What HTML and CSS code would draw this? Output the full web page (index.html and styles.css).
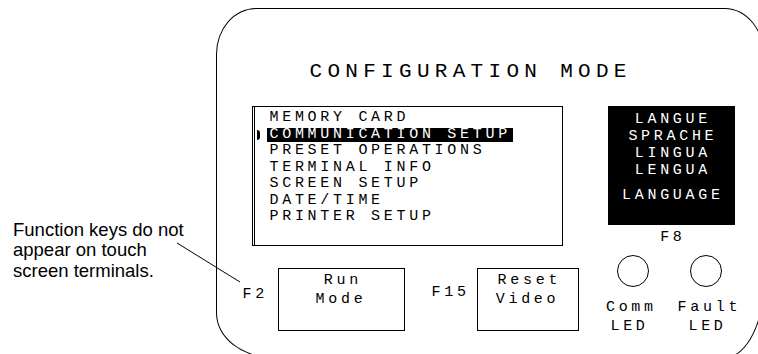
FILE: index.html
```html
<!DOCTYPE html>
<html>
<head>
<meta charset="utf-8">
<link rel="stylesheet" href="styles.css">
</head>
<body>
<div class="page">
  <div class="note">
    <p>Function keys do not<br>appear on touch<br>screen terminals.</p>
  </div>
  <div class="panel">
    <div class="title">CONFIGURATION MODE</div>
    <div class="middle">
      <div class="menu">
        <div class="row"><span class="mark"></span><span class="label">MEMORY CARD</span></div>
        <div class="row active"><span class="mark"><i class="caret"></i></span><span class="label">COMMUNICATION SETUP</span></div>
        <div class="row"><span class="mark"></span><span class="label">PRESET OPERATIONS</span></div>
        <div class="row"><span class="mark"></span><span class="label">TERMINAL INFO</span></div>
        <div class="row"><span class="mark"></span><span class="label">SCREEN SETUP</span></div>
        <div class="row"><span class="mark"></span><span class="label">DATE/TIME</span></div>
        <div class="row"><span class="mark"></span><span class="label">PRINTER SETUP</span></div>
      </div>
      <div class="lang">
        <div class="lang-box">
          <div>LANGUE</div>
          <div>SPRACHE</div>
          <div>LINGUA</div>
          <div>LENGUA</div>
          <div class="last">LANGUAGE</div>
        </div>
        <div class="f8">F8</div>
      </div>
    </div>
    <div class="bottom">
      <div class="key">
        <span class="fkey fkey-2">F2</span>
        <div class="btn btn-run">Run<br>Mode</div>
      </div>
      <div class="key key-15">
        <span class="fkey fkey-15">F15</span>
        <div class="btn btn-reset">Reset<br>Video</div>
      </div>
      <div class="led led-comm">
        <span class="lamp"></span>
        <span class="led-text">Comm<br>LED</span>
      </div>
      <div class="led led-fault">
        <span class="lamp"></span>
        <span class="led-text">Fault<br>LED</span>
      </div>
    </div>
  </div>
  <svg class="leader" width="758" height="354" viewBox="0 0 758 354">
    <line x1="177" y1="243" x2="240" y2="282" stroke="#000" stroke-width="1"/>
  </svg>
</div>
</body>
</html>
```
FILE: styles.css
```css
html, body {
  margin: 0;
  padding: 0;
  background: #fff;
}
body {
  width: 758px;
  height: 354px;
  overflow: hidden;
}
.page {
  position: relative;
  display: flex;
  align-items: flex-start;
  width: 758px;
  height: 354px;
  overflow: hidden;
  color: #000;
}
.note {
  flex: none;
  width: 216px;
  box-sizing: border-box;
  padding: 219.6px 0 0 13px;
  font-family: "Liberation Sans", Arial, sans-serif;
  font-size: 18.5px;
  line-height: 20.5px;
}
.note p {
  margin: 0;
}
.panel {
  flex: none;
  box-sizing: border-box;
  width: 549px;
  height: 350px;
  margin-top: 8px;
  padding-top: 51.3px;
  border: 1.5px solid #000;
  border-radius: 40px 40px 40px 57px / 46px 50px 80px 45px;
  font-family: "Liberation Mono", "Courier New", monospace;
  font-size: 15px;
  letter-spacing: 3.7px;
}
.title {
  margin-left: 92.5px;
  font-size: 21px;
  line-height: 24px;
  letter-spacing: 5.3px;
  white-space: nowrap;
}
.middle {
  display: flex;
  align-items: flex-start;
  margin-top: 22.2px;
  margin-left: 34.5px;
}
.menu {
  box-sizing: border-box;
  width: 311px;
  height: 140px;
  padding-top: 2.4px;
  border: 1px solid #000;
  border-left: 3px double #000;
  line-height: 16.6px;
}
.row {
  display: flex;
  align-items: center;
  height: 16.6px;
  white-space: nowrap;
}
.mark {
  flex: none;
  width: 12px;
  height: 16.6px;
  display: flex;
  align-items: center;
}
.caret {
  display: block;
  width: 3px;
  height: 10px;
  margin-left: 2px;
  background: #000;
  border-radius: 0 3px 3px 0;
}
.label {
  padding: 0 2px 0 3px;
}
.active .label {
  background: #000;
  color: #fff;
  height: 14px;
  line-height: 14px;
}
.lang {
  margin-left: 45px;
  width: 127px;
}
.lang-box {
  box-sizing: border-box;
  height: 119px;
  padding-top: 4.5px;
  background: #000;
  color: #fff;
  text-align: center;
  line-height: 17px;
  text-indent: 3.7px;
}
.lang-box .last {
  margin-top: 8px;
}
.f8 {
  margin-top: 3.5px;
  text-align: center;
  line-height: 17px;
  text-indent: 3.7px;
}
.bottom {
  display: flex;
  align-items: flex-start;
  margin-left: 25.5px;
}
.key {
  display: flex;
  align-items: flex-start;
}
.key-15 {
  margin-left: 27px;
}
.fkey {
  flex: none;
  line-height: 16px;
  white-space: nowrap;
}
.fkey-2 {
  width: 35px;
  margin-top: 41px;
}
.fkey-15 {
  width: 45px;
  margin-top: 39px;
}
.btn {
  box-sizing: border-box;
  height: 63px;
  margin-top: 22px;
  padding-top: 2px;
  border: 1px solid #000;
  text-align: center;
  text-indent: 3.7px;
  line-height: 19px;
}
.btn-run {
  width: 127px;
}
.btn-reset {
  width: 102px;
}
.led {
  display: flex;
  flex-direction: column;
  align-items: center;
  width: 56px;
}
.led-comm {
  margin-left: 23px;
}
.led-fault {
  margin-left: 22px;
}
.lamp {
  box-sizing: border-box;
  width: 32px;
  height: 32px;
  margin-top: 9px;
  border: 1.5px solid #000;
  border-radius: 50%;
}
.led-comm .lamp {
  margin-left: 6px;
}
.led-fault .lamp {
  margin-right: 4px;
}
.led-text {
  margin-top: 10.5px;
  text-align: center;
  line-height: 19px;
  text-indent: 3.7px;
  white-space: nowrap;
}
.leader {
  position: absolute;
  left: 0;
  top: 0;
  pointer-events: none;
}
```
